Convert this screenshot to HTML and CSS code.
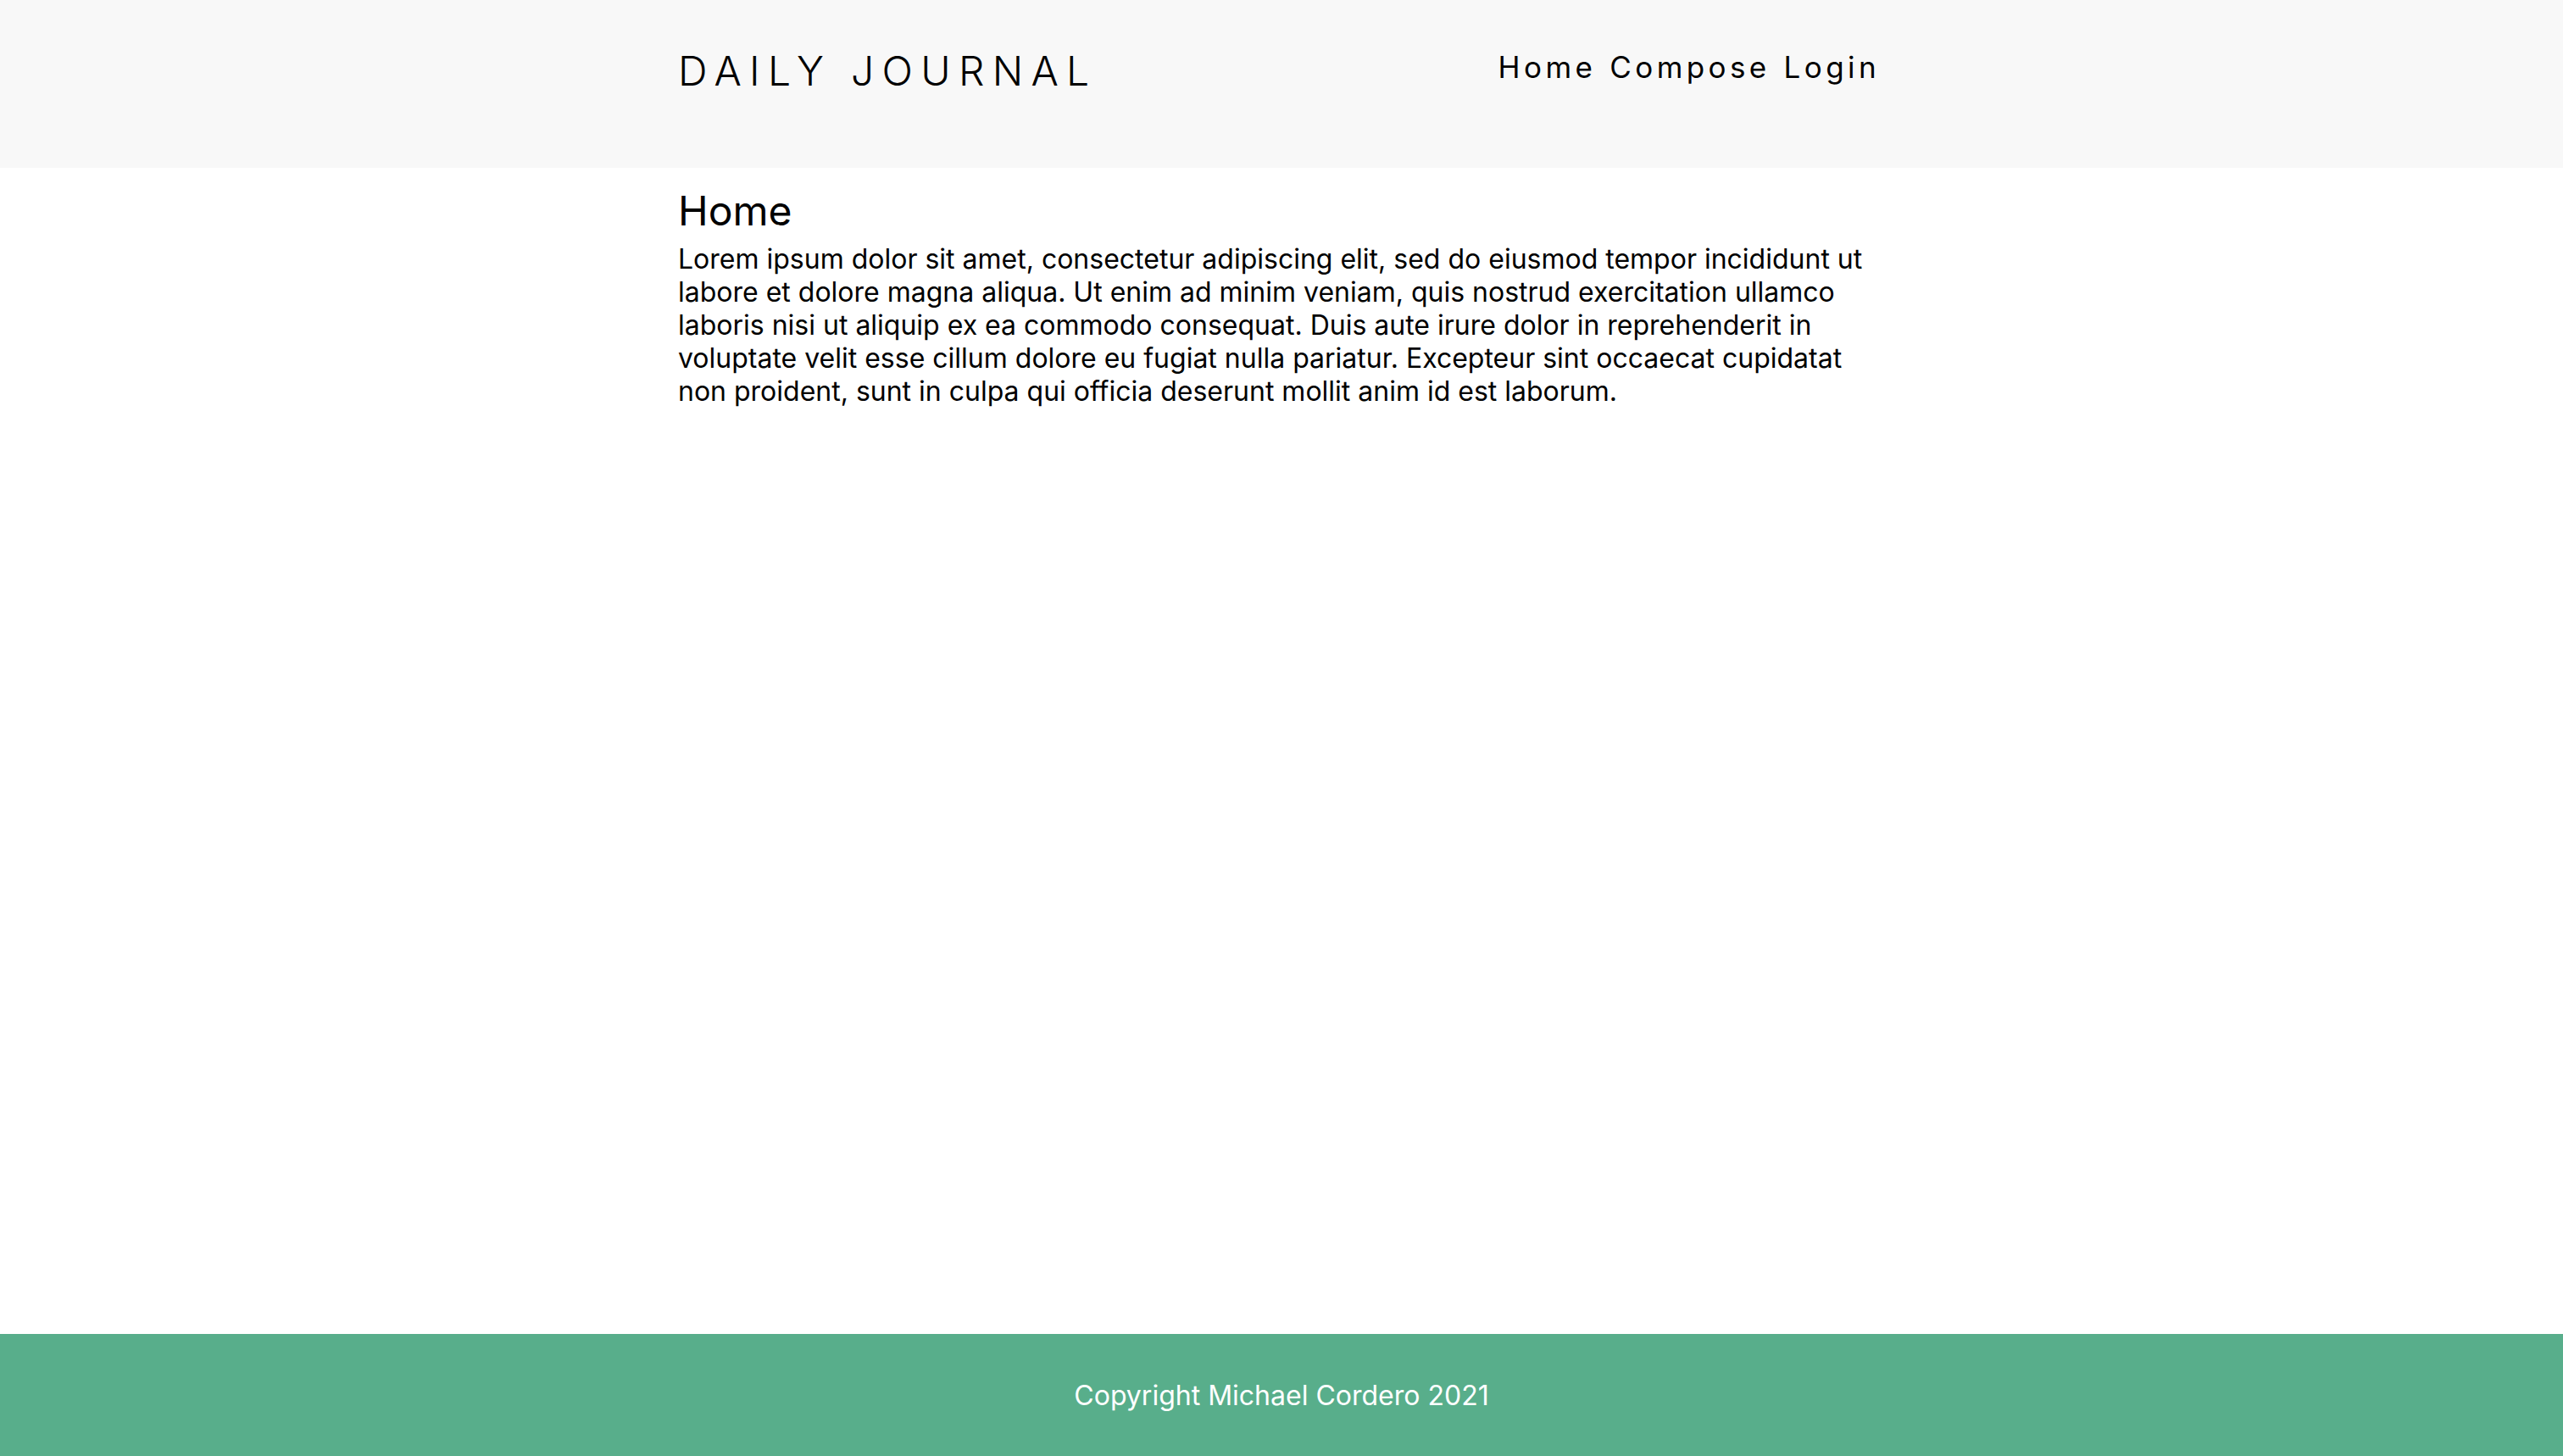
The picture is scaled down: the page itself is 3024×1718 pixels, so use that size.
FILE: index.html
```html
<!DOCTYPE html>
<html lang="en">
<head>
<meta charset="utf-8">
<title>Daily Journal</title>
<link rel="stylesheet" href="styles.css">
</head>
<body>
<header class="site-header">
  <div class="container header-inner">
    <a class="brand" href="#">DAILY JOURNAL</a>
    <nav class="nav">
      <a href="#">Home</a>
      <a href="#">Compose</a>
      <a href="#">Login</a>
    </nav>
  </div>
</header>
<main class="container content">
  <h2 class="page-title">Home</h2>
  <p class="page-text">Lorem ipsum dolor sit amet, consectetur adipiscing elit, sed do eiusmod tempor incididunt ut labore et dolore magna aliqua. Ut enim ad minim veniam, quis nostrud exercitation ullamco laboris nisi ut aliquip ex ea commodo consequat. Duis aute irure dolor in reprehenderit in voluptate velit esse cillum dolore eu fugiat nulla pariatur. Excepteur sint occaecat cupidatat non proident, sunt in culpa qui officia deserunt mollit anim id est laborum.</p>
</main>
<footer class="site-footer">
  <p class="copyright">Copyright Michael Cordero 2021</p>
</footer>
</body>
</html>
```

FILE: styles.css
```css
* { box-sizing: border-box; }

html, body {
  margin: 0;
  padding: 0;
}

body {
  font-family: Inter, "Noto Sans", sans-serif;
  color: #000;
  background: #fff;
  min-height: 100vh;
  display: flex;
  flex-direction: column;
}

a {
  color: inherit;
  text-decoration: none;
}

.container {
  width: 1424px;
  margin: 0 auto;
}

.site-header {
  background: #f8f8f8;
  height: 198px;
}

.header-inner {
  display: flex;
  justify-content: space-between;
  align-items: flex-start;
  padding-top: 54px;
}

.brand {
  font-size: 48px;
  font-weight: 300;
  letter-spacing: 9.3px;
  line-height: normal;
}

.nav {
  display: flex;
  gap: 16px;
  margin-top: 4px;
  margin-right: 6px;
  font-size: 35px;
  font-weight: 400;
  letter-spacing: 4.4px;
  line-height: normal;
}

.content {
  flex: 1;
  padding-top: 21px;
}

.page-title {
  margin: 0 0 8px;
  font-size: 48px;
  font-weight: 400;
  line-height: normal;
}

.page-text {
  margin: 0;
  font-size: 32px;
  line-height: normal;
}

.site-footer {
  background: #58ae8b;
  height: 144px;
  display: flex;
  align-items: center;
  justify-content: center;
}

.copyright {
  margin: 0;
  color: #fff;
  font-size: 32px;
  line-height: normal;
}
```
